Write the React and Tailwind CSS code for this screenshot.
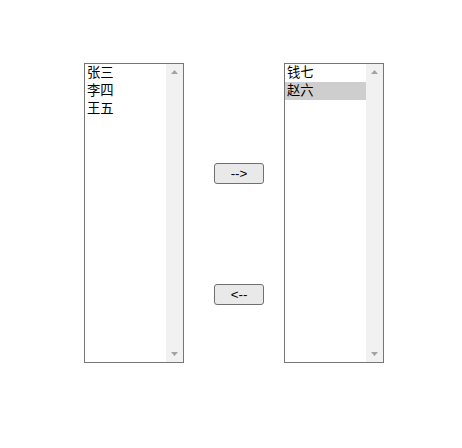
import { useState } from 'react';

const ScrollTrack = () => (
  <div className="w-[17px] h-full bg-[#f1f1f1] flex flex-col items-center justify-between py-[6px]">
    <svg width="7" height="4" viewBox="0 0 7 4">
      <polygon points="0,4 3.5,0 7,4" fill="#a3a3a3" />
    </svg>
    <svg width="7" height="4" viewBox="0 0 7 4">
      <polygon points="0,0 7,0 3.5,4" fill="#a3a3a3" />
    </svg>
  </div>
);

const ListBox = ({ items, selected, onSelect }) => (
  <div className="w-[100px] h-[300px] border border-[#767676] bg-white flex">
    <div className="flex-1 flex flex-col">
      {items.map((name) => (
        <div
          key={name}
          onClick={() => onSelect(name)}
          className={`h-[18px] px-[2px] text-[13.33px] leading-[18px] text-black cursor-default ${
            selected === name ? 'bg-[#cecece]' : ''
          }`}
        >
          {name}
        </div>
      ))}
    </div>
    <ScrollTrack />
  </div>
);

export default function App() {
  const [left, setLeft] = useState(['张三', '李四', '王五']);
  const [right, setRight] = useState(['钱七', '赵六']);
  const [leftSel, setLeftSel] = useState(null);
  const [rightSel, setRightSel] = useState('赵六');

  const moveRight = () => {
    if (!leftSel) return;
    setLeft(left.filter((n) => n !== leftSel));
    setRight([...right, leftSel]);
    setLeftSel(null);
  };

  const moveLeft = () => {
    if (!rightSel) return;
    setRight(right.filter((n) => n !== rightSel));
    setLeft([...left, rightSel]);
    setRightSel(null);
  };

  return (
    <div
      className="w-[462px] h-[448px] bg-white pl-[84px] pt-[63px] flex items-start"
      style={{ fontFamily: '"Liberation Sans", "Noto Sans CJK SC", sans-serif' }}
    >
      <ListBox items={left} selected={leftSel} onSelect={setLeftSel} />

      <div className="w-[50px] ml-[30px] mr-[20px] flex flex-col">
        <button
          onClick={moveRight}
          className="mt-[100px] h-[21px] w-[50px] border border-[#707070] rounded-[3px] bg-[#e9e9e9] text-[13.33px] leading-none text-black"
        >
          --&gt;
        </button>
        <button
          onClick={moveLeft}
          className="mt-[100px] h-[21px] w-[50px] border border-[#707070] rounded-[3px] bg-[#e9e9e9] text-[13.33px] leading-none text-black"
        >
          &lt;--
        </button>
      </div>

      <ListBox items={right} selected={rightSel} onSelect={setRightSel} />
    </div>
  );
}
